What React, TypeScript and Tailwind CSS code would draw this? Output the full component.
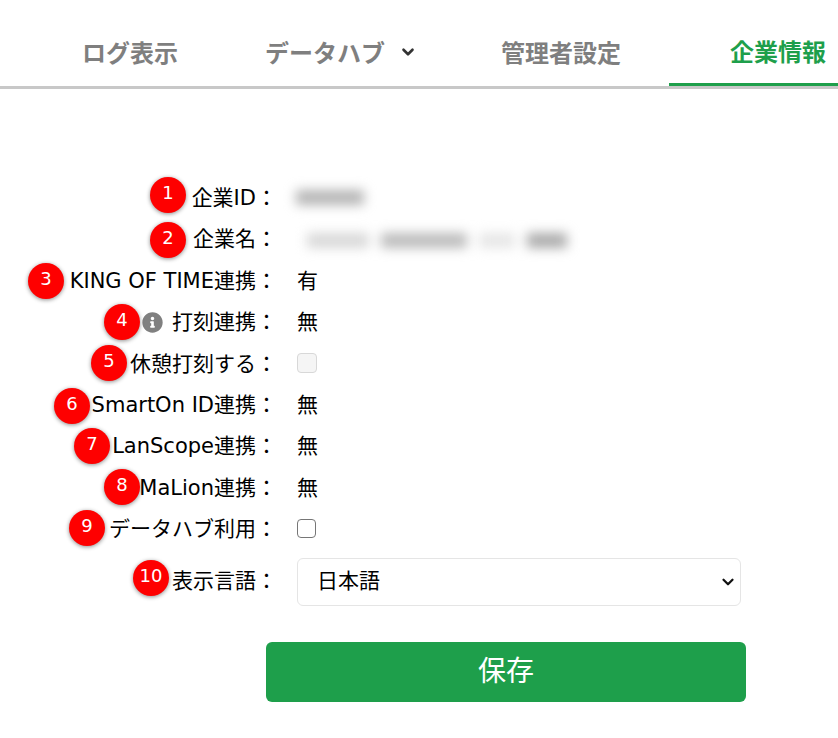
import { ChevronDown } from "lucide-react";
import { FaInfoCircle } from "react-icons/fa";

const font = { fontFamily: '"DejaVu Sans", "Noto Sans CJK JP", sans-serif' };
const navFont = { fontFamily: '"Noto Sans CJK JP", sans-serif' };

function Badge({ n, className }: { n: number; className: string }) {
  return (
    <span className={`absolute flex h-[36px] w-[36px] items-center justify-center rounded-full bg-[#fe0000] pb-[5px] text-[18px] leading-none text-white shadow-[0_1px_4px_rgba(0,0,0,0.45)] ${className}`}>
      {n}
    </span>
  );
}

function Row({ label, children, className = "h-[41.4px]" }: { label: React.ReactNode; children: React.ReactNode; className?: string }) {
  return (
    <div className={`flex items-center ${className}`}>
      <div className="flex w-[277px] shrink-0 items-center justify-end whitespace-nowrap">{label}<span>：</span></div>
      <div className="ml-[20px] flex flex-1 items-center">{children}</div>
    </div>
  );
}

export default function App() {
  return (
    <div className="h-[738px] w-[838px] overflow-hidden bg-white text-[21px] text-black" style={font}>
      <nav className="h-[89px] border-b-[3px] border-[#c8c8c8] font-bold text-[#7f7f7f]" style={navFont}>
        <div className="flex h-[86px] w-full items-center pt-[18px] text-[24px]">
          <a className="ml-[82px] w-[183px]">ログ表示</a>
          <a className="flex w-[236px] items-center">データハブ<ChevronDown size={18} strokeWidth={3.5} className="ml-[14px] text-[#333]" /></a>
          <a className="w-[168px]">管理者設定</a>
          <a className="-mt-[18px] flex h-[86px] flex-1 items-center border-b-[3px] border-[#1e9f4b] pl-[61px] pt-[18px] text-[#1e9f4b]">企業情報</a>
        </div>
      </nav>

      <div className="relative pt-[89px]">
        <Row label="企業ID">
          <div className="h-[15px] w-[68px] -translate-x-[1px] -translate-y-[1px] bg-[#b4b4b4] blur-[6px]" />
        </Row>
        <Row label="企業名">
          <div className="flex translate-x-[10px] items-center gap-[12px] blur-[6px]">
            <div className="h-[15px] w-[62px] bg-[#d8d8d8]" />
            <div className="h-[15px] w-[86px] bg-[#bbb]" />
            <div className="h-[15px] w-[36px] bg-[#e6e6e6]" />
            <div className="h-[15px] w-[40px] bg-[#aaa]" />
          </div>
        </Row>
        <Row label="KING OF TIME連携">有</Row>
        <Row label={<><FaInfoCircle size={21} className="mr-[9px] text-[#808080]" />打刻連携</>}>無</Row>
        <Row label="休憩打刻する">
          <input type="checkbox" disabled className="h-[20px] w-[20px] -translate-y-[1px] appearance-none rounded-[4px] border border-[#d8d8d8] bg-[#f5f5f5]" />
        </Row>
        <Row label="SmartOn ID連携">無</Row>
        <Row label="LanScope連携">無</Row>
        <Row label="MaLion連携">無</Row>
        <Row label="データハブ利用">
          <input type="checkbox" className="h-[19px] w-[19px] -translate-y-[1px] appearance-none rounded-[4px] border-[1.5px] border-[#767676] bg-white" />
        </Row>
        <Row label="表示言語" className="mt-[4px] h-[54px]">
          <div className="relative">
            <select className="h-[48px] w-[444px] appearance-none rounded-[6px] border border-[#e5e5e5] bg-white pl-[19px] pr-[10px] text-[21px] text-black outline-none" style={font}>
              <option>日本語</option>
            </select>
            <ChevronDown size={18} strokeWidth={3} className="pointer-events-none absolute right-[4px] top-[15px] text-[#111]" />
          </div>
        </Row>

        <div className="mt-[33px] pl-[266px]">
          <button className="h-[60px] w-[480px] rounded-[6px] bg-[#1e9f4b] text-[28px] text-white">保存</button>
        </div>

        <Badge n={1} className="left-[150px] top-[88px]" />
        <Badge n={2} className="left-[150px] top-[133px]" />
        <Badge n={3} className="left-[28px] top-[174px]" />
        <Badge n={4} className="left-[104px] top-[215px]" />
        <Badge n={5} className="left-[91px] top-[256px]" />
        <Badge n={6} className="left-[54px] top-[299px]" />
        <Badge n={7} className="left-[74px] top-[339px]" />
        <Badge n={8} className="left-[104px] top-[380px]" />
        <Badge n={9} className="left-[69px] top-[421px]" />
        <Badge n={10} className="left-[133px] top-[471px]" />
      </div>
    </div>
  );
}
